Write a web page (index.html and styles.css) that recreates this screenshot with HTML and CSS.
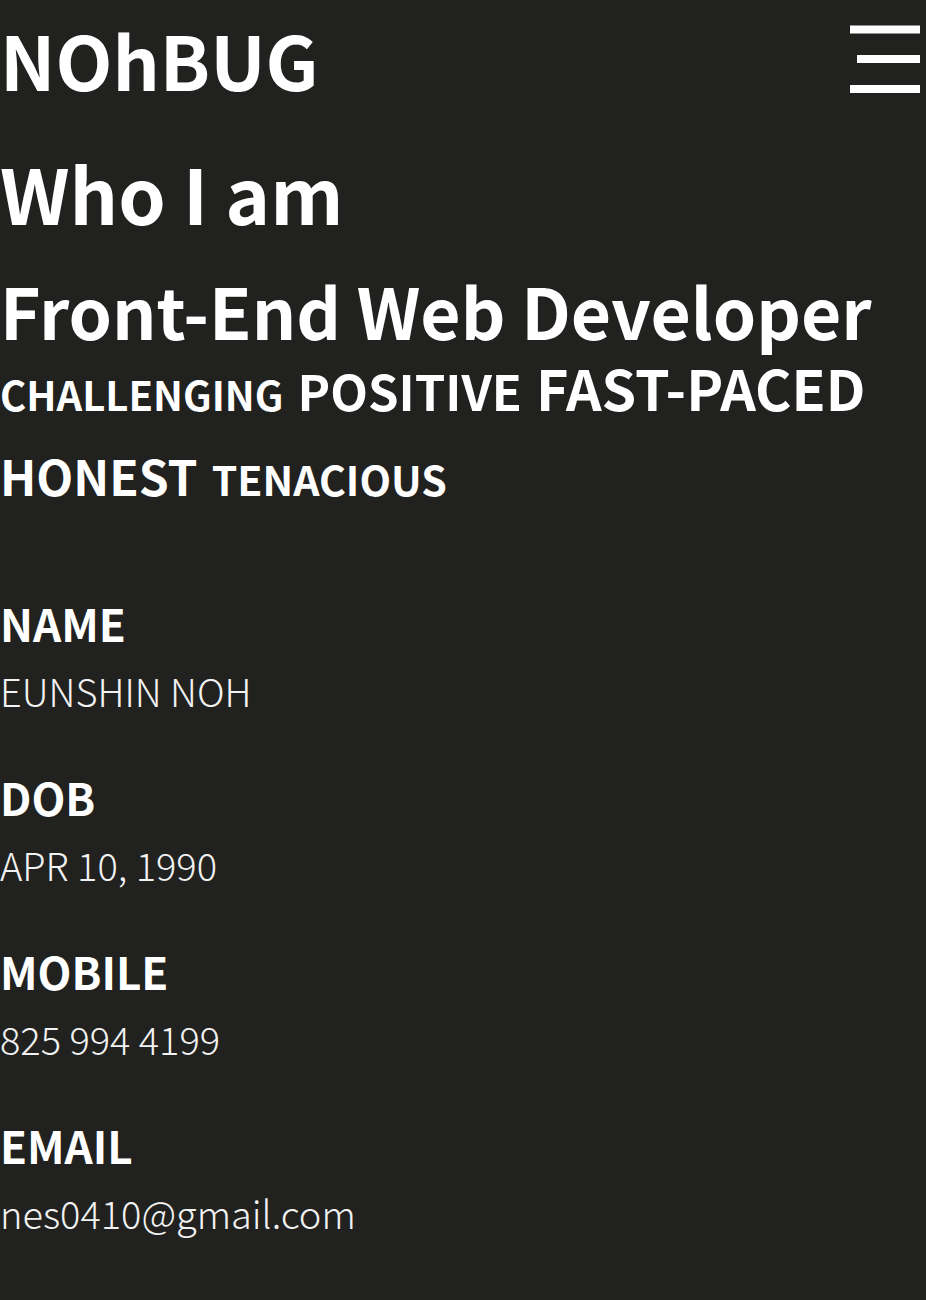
FILE: index.html
```html
<!DOCTYPE html>
<html lang="en">
<head>
<meta charset="utf-8">
<title>NOhBUG</title>
<link rel="stylesheet" href="styles.css">
</head>
<body>
<header class="header">
  <div class="logo">NOhBUG</div>
  <button class="menu" aria-label="menu">
    <svg width="70" height="70" viewBox="0 0 70 70">
      <rect x="0" y="0.5" width="70" height="8" fill="#fff"/>
      <rect x="7" y="30" width="63" height="8" fill="#fff"/>
      <rect x="0" y="60" width="70" height="8" fill="#fff"/>
    </svg>
  </button>
</header>
<main>
  <section class="intro">
    <h1 class="title">Who I am</h1>
    <h2 class="role">Front-End Web Developer</h2>
    <div class="tags">
      <span class="tag t-sm">CHALLENGING</span>
      <span class="tag t-md">POSITIVE</span>
      <span class="tag t-lg">FAST-PACED</span>
      <span class="tag t-ml">HONEST</span>
      <span class="tag t-s2">TENACIOUS</span>
    </div>
  </section>
  <dl class="info">
    <div class="item"><dt>NAME</dt><dd>EUNSHIN NOH</dd></div>
    <div class="item"><dt>DOB</dt><dd>APR 10, 1990</dd></div>
    <div class="item"><dt>MOBILE</dt><dd>825 994 4199</dd></div>
    <div class="item"><dt>EMAIL</dt><dd>nes0410@gmail.com</dd></div>
  </dl>
</main>
</body>
</html>
```
FILE: styles.css
```css
* { box-sizing: border-box; }
html, body { margin: 0; padding: 0; }
body {
  background: #212220;
  color: #fff;
  font-family: "Noto Sans CJK KR", "Noto Sans", sans-serif;
  min-height: 1300px;
}
.header {
  display: flex;
  justify-content: space-between;
  align-items: flex-start;
  padding-top: 22px;
}
.logo {
  font-size: 74px;
  line-height: 1;
  font-weight: 700;
}
.menu {
  background: none;
  border: 0;
  padding: 0;
  margin: 3px 6px 0 0;
  display: block;
}
.menu svg { display: block; }
.intro { margin-top: 58px; }
.title {
  margin: 0;
  font-size: 76px;
  line-height: 1;
  font-weight: 700;
}
.role {
  margin: 45px 0 0;
  font-size: 69.5px;
  line-height: 1;
  font-weight: 700;
}
.tags {
  margin-top: 15.5px;
  display: flex;
  flex-wrap: wrap;
  align-items: baseline;
  column-gap: 14px;
  row-gap: 35.5px;
  font-weight: 700;
}
.tag { line-height: 1; }
.t-sm { font-size: 40px; }
.t-md { font-size: 49px; }
.t-lg { font-size: 55.6px; }
.t-ml { font-size: 48px; }
.t-s2 { font-size: 41px; }
.info { margin: 102px 0 0; }
.item { margin-bottom: 65.4px; }
.item dt {
  font-size: 44px;
  line-height: 1;
  font-weight: 700;
}
.item dd {
  margin: 26.6px 0 0;
  font-size: 38px;
  line-height: 1;
  font-weight: 300;
  color: #f2f2f2;
}
```
